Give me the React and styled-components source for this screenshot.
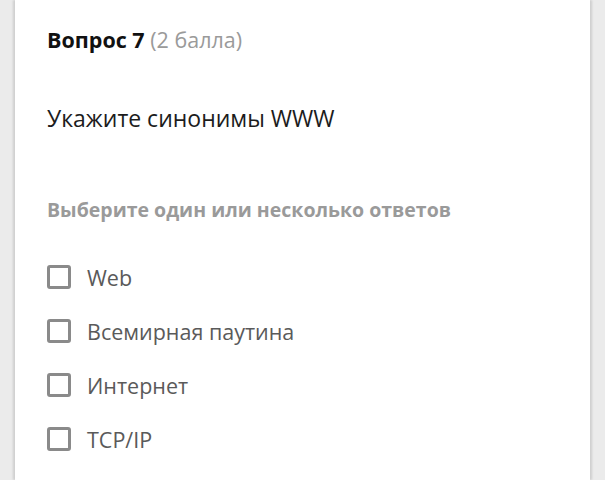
import React from "react";
import styled, { createGlobalStyle } from "styled-components";

const Global = createGlobalStyle`
  html, body { margin: 0; padding: 0; background: #ebebeb; }
  body { font-family: "Open Sans", "Noto Sans", sans-serif; }
`;

const Page = styled.div`
  display: flex;
  height: 480px;
  padding: 0 15px 0 15px;
  background: #ebebeb;
`;

const Card = styled.div`
  flex: 1;
  background: #fff;
  box-shadow: -2px 0 2px rgba(0,0,0,0.12), 2px 0 2px rgba(0,0,0,0.12);
  padding: 24px 0 0 32px;
  display: flex;
  flex-direction: column;
`;

const Title = styled.div`
  font-size: 21.5px;
  line-height: 32px;
  color: #111;
`;

const Strong = styled.span`
  font-weight: 700;
`;

const Points = styled.span`
  color: #9a9a9a;
  font-weight: 400;
`;

const Question = styled.div`
  margin-top: 46px;
  font-size: 23px;
  line-height: 32px;
  color: #1c1c1c;
`;

const Hint = styled.div`
  margin-top: 63px;
  font-size: 19.5px;
  font-weight: 700;
  color: #9a9a9a;
  line-height: 26px;
`;

const Options = styled.div`
  margin-top: 42px;
  display: flex;
  flex-direction: column;
  gap: 30px;
`;

const Option = styled.label`
  display: flex;
  align-items: center;
  gap: 16px;
  height: 24px;
  font-size: 21.5px;
  color: #5a5a5a;
`;

const Box = styled.span`
  width: 18px;
  height: 18px;
  border: 3px solid #8a8a8a;
  border-radius: 3px;
  flex: none;
`;

const options = ["Web", "Всемирная паутина", "Интернет", "TCP/IP"];

export default function App() {
  return (
    <>
      <Global />
      <Page>
        <Card>
          <Title>
            <Strong>Вопрос 7</Strong> <Points>(2 балла)</Points>
          </Title>
          <Question>Укажите синонимы WWW</Question>
          <Hint>Выберите один или несколько ответов</Hint>
          <Options>
            {options.map((o) => (
              <Option key={o}>
                <Box />
                {o}
              </Option>
            ))}
          </Options>
        </Card>
      </Page>
    </>
  );
}
